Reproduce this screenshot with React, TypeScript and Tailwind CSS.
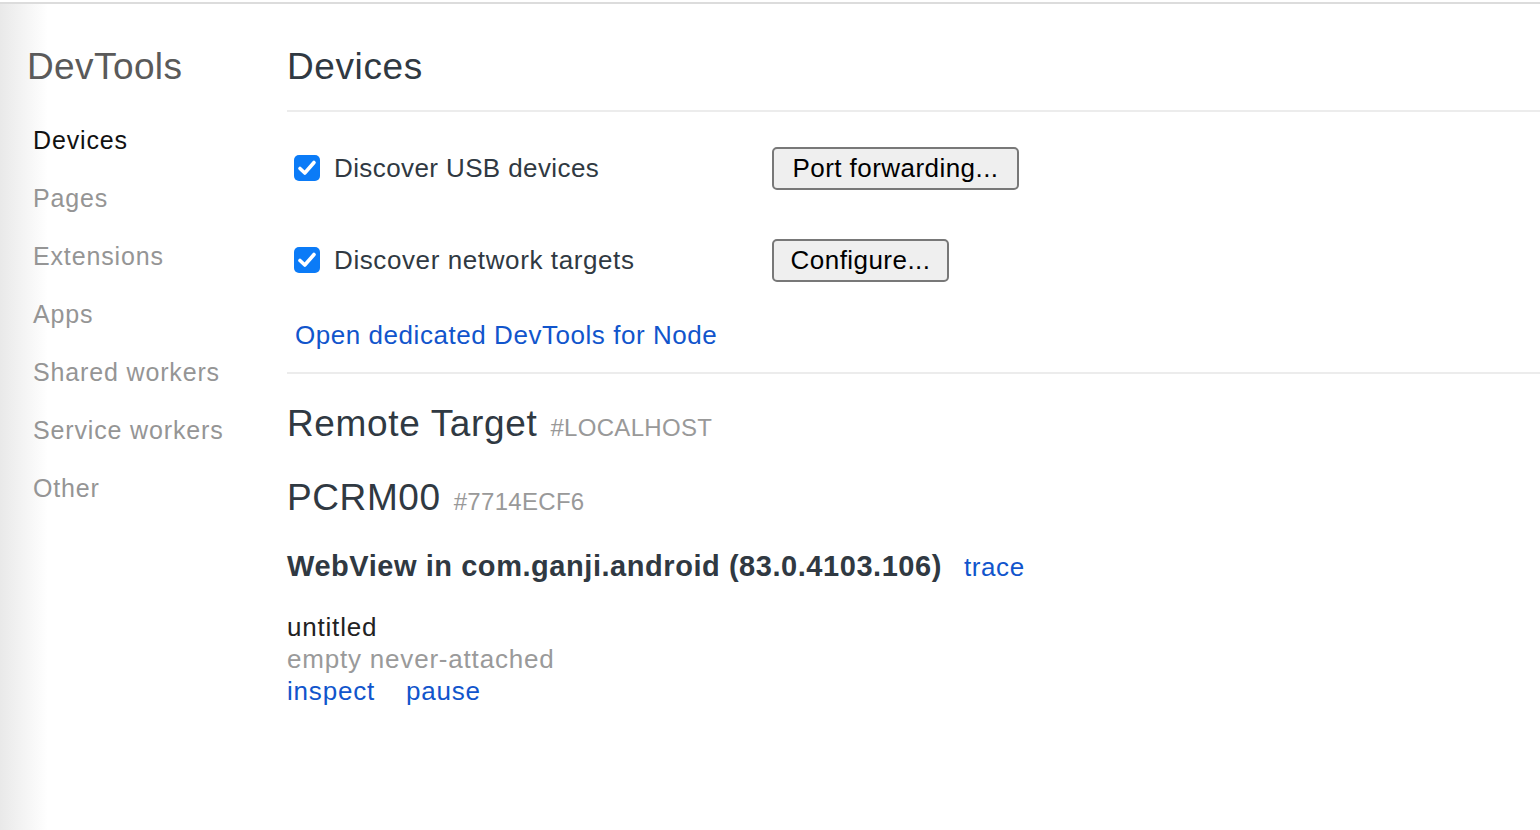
import React from "react";

const LINK = "text-[#1155cc]";

function Check() {
  return (
    <span className="flex h-[26px] w-[26px] items-center justify-center rounded-[5px] bg-[#0b7bf7]">
      <svg width="26" height="26" viewBox="0 0 26 26" fill="none">
        <path d="M6 13.5 L10.8 18 L20 7.5" stroke="white" strokeWidth="3.6" strokeLinecap="round" strokeLinejoin="round" />
      </svg>
    </span>
  );
}

function Btn({ children, w }: { children: React.ReactNode; w: string }) {
  return (
    <button className={`flex h-[43px] items-center justify-center rounded-[5px] border-[2px] border-[#787878] bg-[#efefef] text-[26px] tracking-[0.45px] text-black ${w}`}>
      {children}
    </button>
  );
}

export default function App() {
  const items = ["Devices", "Pages", "Extensions", "Apps", "Shared workers", "Service workers", "Other"];
  return (
    <div className="h-[830px] w-[1540px] overflow-hidden bg-white font-['Liberation_Sans',Arial,sans-serif]">
      <div className="h-[2px] bg-white" />
      <div className="h-[2px] bg-[#dcdcdc]" />
      <div className="flex h-[826px]">
        <aside className="w-[287px] shrink-0 bg-[linear-gradient(to_right,#e9e9e9,#ffffff_48px)] pl-[27px] pt-[44px]">
          <div className="text-[37px] leading-[38px] tracking-[0.4px] text-[#5a5a5a]">DevTools</div>
          <ul className="mt-[25px] pl-[6px]">
            {items.map((it, i) => (
              <li key={it} className={`text-[25px] leading-[58px] tracking-[0.85px] ${i === 0 ? "text-[#111]" : "text-[#959595]"}`}>
                {it}
              </li>
            ))}
          </ul>
        </aside>
        <main className="flex flex-1 flex-col pt-[44px] text-[#303942]">
          <h1 className="text-[37px] leading-[38px] tracking-[0.6px]">Devices</h1>
          <div className="mt-[24px] h-[2px] bg-[#ececec]" />
          <div className="mt-[10px] flex h-[92px] items-center">
            <label className="flex w-[485px] items-center pl-[7px]">
              <Check />
              <span className="ml-[14px] text-[26px] tracking-[0.4px]">Discover USB devices</span>
            </label>
            <Btn w="w-[247px]">Port forwarding...</Btn>
          </div>
          <div className="flex h-[92px] items-center">
            <label className="flex w-[485px] items-center pl-[7px]">
              <Check />
              <span className="ml-[14px] text-[26px] tracking-[0.6px]">Discover network targets</span>
            </label>
            <Btn w="w-[177px]">Configure...</Btn>
          </div>
          <div className={`mt-[9px] pl-[8px] text-[26px] leading-[40px] tracking-[0.55px] ${LINK}`}>Open dedicated DevTools for Node</div>
          <div className="mt-[17px] h-[2px] bg-[#ececec]" />
          <div className="mt-[28px] flex items-baseline leading-[44px]">
            <span className="text-[37px] tracking-[0.65px]">Remote Target</span>
            <span className="ml-[13px] text-[24px] tracking-[0.3px] text-[#999]">#LOCALHOST</span>
          </div>
          <div className="mt-[26px] flex items-baseline leading-[44px]">
            <span className="text-[37px] tracking-[0.6px]">PCRM00</span>
            <span className="ml-[13px] text-[24px] tracking-[0.3px] text-[#999]">#7714ECF6</span>
          </div>
          <div className="mt-[22px] flex items-baseline leading-[40px]">
            <span className="text-[29px] font-bold tracking-[0.55px]">WebView in com.ganji.android (83.0.4103.106)</span>
            <span className={`ml-[22px] text-[26px] tracking-[0.6px] ${LINK}`}>trace</span>
          </div>
          <div className="mt-[24px] text-[26px] leading-[32px] tracking-[0.8px]">
            <div className="text-[#222]">untitled</div>
            <div className="text-[#9a9a9a]">empty never-attached</div>
            <div className="flex gap-[31px]">
              <span className={LINK}>inspect</span>
              <span className={LINK}>pause</span>
            </div>
          </div>
        </main>
      </div>
    </div>
  );
}
